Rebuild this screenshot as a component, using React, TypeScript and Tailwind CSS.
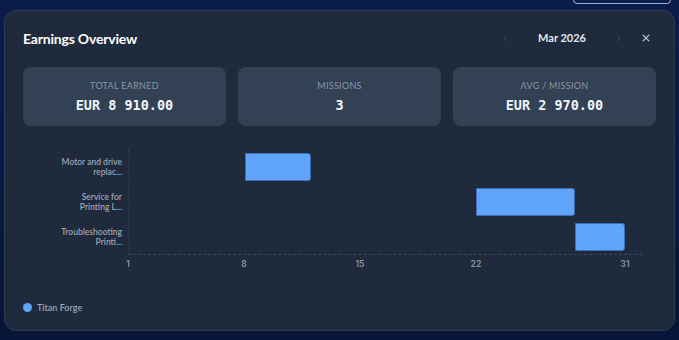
import { ChevronLeft, ChevronRight, X } from "lucide-react";

type Mission = {
  label: [string, string];
  start: number;
  end: number;
};

const missions: Mission[] = [
  { label: ["Motor and drive", "replac..."], start: 8, end: 12 },
  { label: ["Service for", "Printing L..."], start: 22, end: 28 },
  { label: ["Troubleshooting", "Printi..."], start: 28, end: 31 },
];

const ticks = [1, 8, 15, 22, 31];

// day -> percent of the scale area (day 1..31)
const pos = (d: number) => ((d - 1) / 30) * 100;

const StatCard = ({ label, value }: { label: string; value: string }) => (
  <div className="bg-[#334155] rounded-lg h-[59px] flex flex-col items-center justify-center gap-[9px]">
    <span className="text-[9px] tracking-[0.3px] text-[#8b97a8] uppercase leading-none font-['Lato',sans-serif]">
      {label}
    </span>
    <span className="text-[13.5px] font-bold text-[#f1f5f9] leading-none font-['DejaVu_Sans_Mono',monospace]">
      {value}
    </span>
  </div>
);

const App = () => {
  return (
    <div className="w-[679px] h-[340px] bg-gradient-to-b from-[#0b1c4c] to-[#08163a] relative overflow-hidden font-['Lato',sans-serif]">
      <div className="absolute right-[8px] top-[-6px] w-[98px] h-[10px] rounded-[4px] border border-[#9fb0d0]" />
      <div className="absolute left-[4px] top-[10px] w-[671px] h-[321px] bg-[#1f2a3c] border border-[#2c3a50] rounded-[12px] px-[18px] pt-[18px]">
        <div className="flex items-center justify-between h-[18px]">
          <h2 className="text-[14px] font-bold text-white tracking-[-0.2px]">Earnings Overview</h2>
          <div className="flex items-center text-[#94a3b8]">
            <ChevronLeft className="w-[11px] h-[11px] text-[#3f4b5e] mr-[24px]" strokeWidth={2} />
            <span className="text-[11px] font-bold text-[#e2e8f0] w-[54px] text-center">Mar 2026</span>
            <ChevronRight className="w-[11px] h-[11px] text-[#3f4b5e] ml-[24px]" strokeWidth={2} />
            <X className="w-[12px] h-[12px] text-[#b8c2d0] ml-[16px] mr-[4px]" strokeWidth={2.25} />
          </div>
        </div>

        <div className="grid grid-cols-3 gap-[12px] mt-[20px]">
          <StatCard label="Total Earned" value="EUR 8 910.00" />
          <StatCard label="Missions" value="3" />
          <StatCard label="Avg / Mission" value="EUR 2 970.00" />
        </div>

        <div className="flex mt-[23px]">
          <div className="w-[99px] flex flex-col h-[106px]">
            {missions.map((m) => (
              <div
                key={m.label[0]}
                className="flex-1 flex flex-col items-end justify-center text-[8.5px] font-semibold leading-[10px] text-[#9aa5b5] font-['Lato',sans-serif]"
              >
                <span>{m.label[0]}</span>
                <span>{m.label[1]}</span>
              </div>
            ))}
          </div>
          <div className="ml-[6px] w-[514px]">
            <div className="h-[106px] border-l border-[#2e3a4e] border-b border-dashed border-b-[#3a4659] relative">
              <div className="absolute inset-y-0 left-0 right-[17px] flex flex-col">
                {missions.map((m) => (
                  <div key={m.label[0]} className="flex-1 relative">
                    <div
                      className="absolute top-1/2 -translate-y-1/2 h-[28px] bg-[#60a5fa] border border-[#3b6fb8] rounded-r-[3px]"
                      style={{ left: `${pos(m.start)}%`, width: `${pos(m.end) - pos(m.start)}%` }}
                    />
                  </div>
                ))}
              </div>
            </div>
            <div className="relative h-[16px] mr-[17px]">
              {ticks.map((t) => (
                <span
                  key={t}
                  className="absolute top-[5px] -translate-x-1/2 text-[8.5px] font-semibold text-[#8a95a6] font-['Inter',sans-serif] leading-none"
                  style={{ left: `${pos(t)}%` }}
                >
                  {t}
                </span>
              ))}
            </div>
          </div>
        </div>

        <div className="flex items-center gap-[5px] mt-[30px]">
          <span className="w-[9px] h-[9px] rounded-full bg-[#60a5fa]" />
          <span className="text-[9px] font-semibold text-[#9aa5b5]">Titan Forge</span>
        </div>
      </div>
    </div>
  );
};

export default App;
